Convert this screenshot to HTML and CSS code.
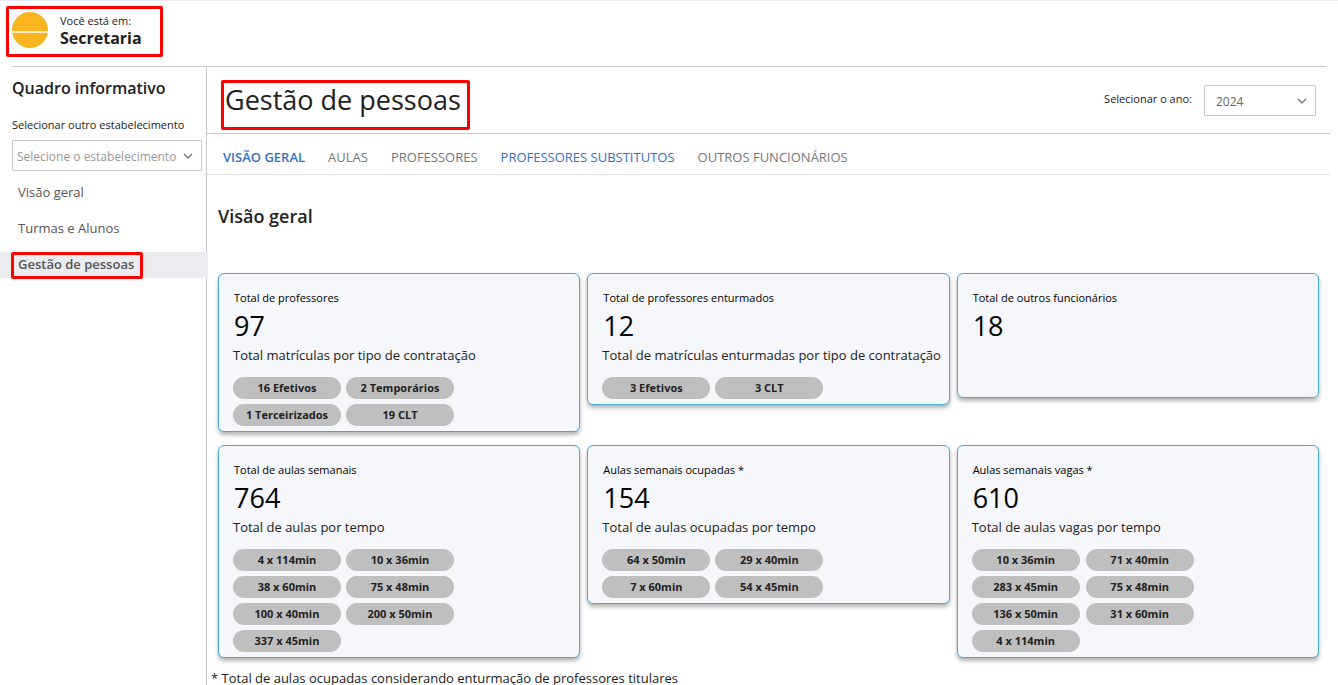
FILE: index.html
```html
<!DOCTYPE html>
<html lang="pt-BR">
<head>
<meta charset="utf-8">
<meta name="viewport" content="width=device-width, initial-scale=1">
<title>Gestão de pessoas</title>
<link rel="stylesheet" href="styles.css">
</head>
<body>
<header class="topbar">
  <div class="brand marked">
    <svg class="brand-logo" viewBox="0 0 36 36" aria-hidden="true"><circle cx="18" cy="18" r="18" fill="#f8b51f"/><path d="M0 20h36" stroke="#fff" stroke-width="1.4"/></svg>
    <div class="brand-text">
      <span class="brand-hint">Você está em:</span>
      <strong class="brand-name">Secretaria</strong>
    </div>
  </div>
</header>
<div class="layout">
  <aside class="sidebar">
    <h2 class="sidebar-title">Quadro informativo</h2>
    <label class="sidebar-label" for="school">Selecionar outro estabelecimento</label>
    <div class="select sidebar-select">
      <select id="school" class="select-field select-placeholder"><option>Selecione o estabelecimento</option></select>
      <svg class="chevron" viewBox="0 0 10 6" aria-hidden="true"><path d="M1 1l4 4 4-4"/></svg>
    </div>
    <nav class="menu">
      <a class="menu-item" href="#geral">Visão geral</a>
      <a class="menu-item" href="#turmas">Turmas e Alunos</a>
      <a class="menu-item menu-active" href="#pessoas"><span class="menu-mark marked">Gestão de pessoas</span></a>
    </nav>
  </aside>
  <main class="main">
    <div class="page-head">
      <h1 class="page-title marked">Gestão de pessoas</h1>
      <div class="year">
        <label class="year-label" for="year">Selecionar o ano:</label>
        <div class="select year-select">
          <select id="year" class="select-field select-year"><option>2024</option></select>
          <svg class="chevron" viewBox="0 0 10 6" aria-hidden="true"><path d="M1 1l4 4 4-4"/></svg>
        </div>
      </div>
    </div>
    <nav class="tabs">
      <a class="tab tab-active" href="#t1">VISÃO GERAL</a>
      <a class="tab" href="#t2">AULAS</a>
      <a class="tab" href="#t3">PROFESSORES</a>
      <a class="tab tab-blue" href="#t4">PROFESSORES SUBSTITUTOS</a>
      <a class="tab" href="#t5">OUTROS FUNCIONÁRIOS</a>
    </nav>
    <h2 class="section-title">Visão geral</h2>
    <div class="cards">
      <section class="card">
        <h3 class="card-label">Total de professores</h3>
        <p class="card-number">97</p>
        <p class="card-text">Total matrículas por tipo de contratação</p>
        <ul class="pills"><li class="pill">16 Efetivos</li><li class="pill">2 Temporários</li><li class="pill">1 Terceirizados</li><li class="pill">19 CLT</li></ul>
      </section>
      <section class="card">
        <h3 class="card-label">Total de professores enturmados</h3>
        <p class="card-number">12</p>
        <p class="card-text">Total de matrículas enturmadas por tipo de contratação</p>
        <ul class="pills"><li class="pill">3 Efetivos</li><li class="pill">3 CLT</li></ul>
      </section>
      <section class="card">
        <h3 class="card-label">Total de outros funcionários</h3>
        <p class="card-number">18</p>
      </section>
      <section class="card">
        <h3 class="card-label">Total de aulas semanais</h3>
        <p class="card-number">764</p>
        <p class="card-text">Total de aulas por tempo</p>
        <ul class="pills"><li class="pill">4 x 114min</li><li class="pill">10 x 36min</li><li class="pill">38 x 60min</li><li class="pill">75 x 48min</li><li class="pill">100 x 40min</li><li class="pill">200 x 50min</li><li class="pill">337 x 45min</li></ul>
      </section>
      <section class="card">
        <h3 class="card-label">Aulas semanais ocupadas *</h3>
        <p class="card-number">154</p>
        <p class="card-text">Total de aulas ocupadas por tempo</p>
        <ul class="pills"><li class="pill">64 x 50min</li><li class="pill">29 x 40min</li><li class="pill">7 x 60min</li><li class="pill">54 x 45min</li></ul>
      </section>
      <section class="card">
        <h3 class="card-label">Aulas semanais vagas *</h3>
        <p class="card-number">610</p>
        <p class="card-text">Total de aulas vagas por tempo</p>
        <ul class="pills pills-wide"><li class="pill">10 x 36min</li><li class="pill">71 x 40min</li><li class="pill">283 x 45min</li><li class="pill">75 x 48min</li><li class="pill">136 x 50min</li><li class="pill">31 x 60min</li><li class="pill">4 x 114min</li></ul>
      </section>
    </div>
    <p class="note">* Total de aulas ocupadas considerando enturmação de professores titulares</p>
  </main>
</div>
</body>
</html>
```
FILE: styles.css
```css
* { box-sizing: border-box; }
body {
  margin: 0;
  min-height: 100vh;
  display: flex;
  flex-direction: column;
  background: #fff;
  color: #212121;
  font-family: "Open Sans", "Noto Sans", sans-serif;
  font-size: 13px;
  line-height: 18px;
  border-top: 1px solid #e9e9ee;
}
h1, h2, h3, p, ul { margin: 0; padding: 0; }
a { text-decoration: none; }
.marked { border: 3px solid #f00; border-radius: 2px; }

.topbar {
  margin: 0 11px 0 12px;
  padding: 5px 0 9px;
  border-bottom: 1px solid #c8c8c8;
}
.brand {
  display: inline-flex;
  vertical-align: top;
  align-items: center;
  gap: 12px;
  height: 51px;
  margin-left: -6px;
  padding: 0 18px 4px 3px;
}
.brand-logo { width: 36px; height: 36px; }
.brand-text { display: flex; flex-direction: column; }
.brand-hint { font-size: 11px; line-height: 16px; }
.brand-name { font-size: 16px; line-height: 18px; font-weight: 700; }

.layout { display: flex; flex: 1; }
.sidebar { width: 207px; flex: none; border-right: 1px solid #c8c8c8; padding-top: 9px; }
.sidebar-title { font-size: 16px; line-height: 24px; font-weight: 600; padding-left: 12px; }
.sidebar-label { display: block; margin-top: 17px; padding-left: 12px; font-size: 11px; line-height: 16px; }
.sidebar-select { margin: 7px 4px 0 12px; }

.select { position: relative; }
.select-field {
  display: block;
  width: 100%;
  height: 31px;
  margin: 0;
  padding: 2px 24px 0 4px;
  appearance: none;
  border: 1px solid #c8c8c8;
  border-radius: 1px;
  background: #fff;
  color: #666;
  font-family: inherit;
  font-size: 12px;
}
.select-placeholder { color: #999; }
.select-year { padding-left: 11px; }
.chevron {
  position: absolute;
  right: 9px;
  top: 13px;
  width: 10px;
  height: 6px;
  fill: none;
  stroke: #757575;
  stroke-width: 1.4;
  pointer-events: none;
}

.menu { display: flex; flex-direction: column; gap: 10px; margin: 9px -2px 0 0; }
.menu-item { display: flex; align-items: center; height: 26px; padding: 0 0 2px 18px; color: #555; }
.menu-active { padding: 0 0 0 11px; background: #ebecf0; font-weight: 600; }
.menu-mark { height: 27px; padding: 0 6px 0 4px; }

.main { flex: 1; min-width: 0; }
.page-head {
  display: flex;
  align-items: flex-start;
  justify-content: space-between;
  margin-right: 8px;
  padding: 13px 14px 3px 14px;
  border-bottom: 1px solid #c8c8c8;
}
.page-title { height: 50px; padding: 0 6px 0 1px; font-size: 27px; line-height: 34px; font-weight: 400; }
.year { display: flex; align-items: center; gap: 12px; padding-top: 5px; }
.year-label { font-size: 11px; line-height: 16px; padding-bottom: 4px; }
.year-select { width: 112px; }

.tabs {
  display: flex;
  gap: 23px;
  margin-right: 8px;
  padding: 14px 16px 8px;
  border-bottom: 1px solid #e0e0e0;
}
.tab { color: #757575; font-size: 13px; }
.tab-active { color: #3271c0; font-weight: 600; }
.tab-blue { color: #3271c0; }
.section-title { padding: 29px 11px 0; font-size: 18px; line-height: 24px; font-weight: 600; }

.cards {
  display: grid;
  grid-template-columns: repeat(3, minmax(0, 1fr));
  align-items: start;
  gap: 13px 7px;
  margin: 45px 19px 0 11px;
}
.card {
  min-height: 125px;
  padding: 15px 0 5px 14px;
  border: 1px solid #43acd0;
  border-radius: 6px;
  background: #f5f7fb;
  box-shadow: 0 3px 4px rgba(0, 0, 0, 0.3);
}
.card-label { padding-left: 1px; font-size: 11px; line-height: 18px; font-weight: 400; color: #000; }
.card-number { padding-left: 1px; font-size: 27px; line-height: 38px; color: #000; }
.card-text { line-height: 20px; }
.pills { display: flex; flex-wrap: wrap; gap: 5px; margin-top: 12px; list-style: none; max-width: 240px; }
.pills-wide { column-gap: 6px; }
.pill {
  width: 108px;
  height: 22px;
  border-radius: 11px;
  background: #bfbfbf;
  font-size: 11px;
  line-height: 22px;
  font-weight: 700;
  text-align: center;
}
.note { margin: 12px 0 0 4px; line-height: 16px; }
```
